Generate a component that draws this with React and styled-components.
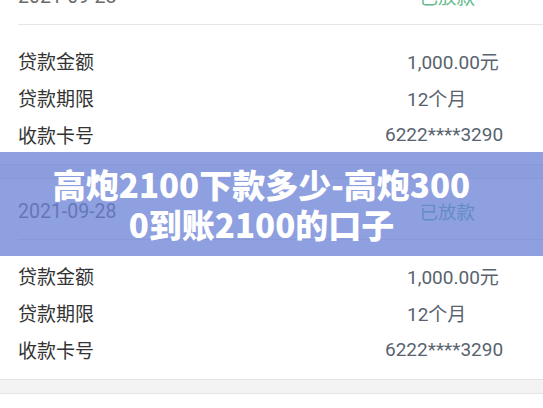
import React from "react";
import styled, { createGlobalStyle } from "styled-components";

const Global = createGlobalStyle`
  html, body {
    margin: 0;
    padding: 0;
    background: #ffffff;
    overflow: hidden;
  }
  body {
    font-family: Roboto, "Noto Sans CJK SC", sans-serif;
  }
`;

const Page = styled.div`
  position: relative;
  width: 543px;
  height: 408px;
  overflow: hidden;
  background: #ffffff;
`;

const List = styled.div`
  display: flex;
  flex-direction: column;
  margin-top: -36px;
`;

const Card = styled.section`
  background: #ffffff;
  display: flex;
  flex-direction: column;
`;

const Header = styled.div`
  height: 60px;
  box-sizing: border-box;
  padding: 4px 68px 0 18px;
  display: flex;
  align-items: center;
  justify-content: space-between;
`;

const DateText = styled.span`
  font-family: Roboto, "Noto Sans CJK SC", sans-serif;
  font-size: 19.5px;
  color: #6a6a6a;
`;

const Status = styled.span`
  font-family: "Noto Sans CJK SC", sans-serif;
  font-size: 18.5px;
  color: #62b98c;
`;

const Divider = styled.div`
  height: 1px;
  margin-left: 18px;
  background: #e6e6e6;
`;

const Body = styled.div`
  padding: 17px 0 11px 18px;
  display: flex;
  flex-direction: column;
`;

const Row = styled.div`
  height: 37px;
  display: grid;
  grid-template-columns: 389px auto;
  align-items: center;
`;

const Label = styled.span`
  font-family: "Noto Sans CJK SC", sans-serif;
  font-size: 19px;
  color: #333333;
  white-space: nowrap;
`;

const Value = styled.span`
  font-family: Roboto, "Noto Sans CJK SC", sans-serif;
  font-size: 19px;
  color: #58636e;
  white-space: nowrap;
  margin-left: ${(p) => (p.$lead ? `-${p.$lead}px` : "0")};
`;

const Gap = styled.div`
  height: 13px;
  background: #f3f3f3;
  border-top: 1px solid #e4e4e4;
  border-bottom: 1px solid #e4e4e4;
`;

const Banner = styled.div`
  position: absolute;
  left: 0;
  right: 0;
  top: 152px;
  height: 104px;
  box-sizing: border-box;
  padding: 12px 66px 12px 46px;
  background: rgba(100, 124, 214, 0.72);
  display: flex;
  justify-content: center;
`;

const Title = styled.h1`
  margin: 0;
  font-family: "Noto Sans CJK SC", sans-serif;
  font-weight: 900;
  font-size: 33px;
  line-height: 40px;
  color: #ffffff;
  text-align: center;
  word-break: break-all;
`;

const loan = {
  date: "2021-09-28",
  status: "已放款",
  rows: [
    { label: "贷款金额", value: "1,000.00元" },
    { label: "贷款期限", value: "12个月" },
    { label: "收款卡号", value: "6222****3290", lead: 22 },
  ],
};

function LoanCard({ data }) {
  return (
    <Card>
      <Header>
        <DateText>{data.date}</DateText>
        <Status>{data.status}</Status>
      </Header>
      <Divider />
      <Body>
        {data.rows.map((r) => (
          <Row key={r.label}>
            <Label>{r.label}</Label>
            <Value $lead={r.lead}>{r.value}</Value>
          </Row>
        ))}
      </Body>
    </Card>
  );
}

export default function App() {
  return (
    <Page>
      <Global />
      <List>
        <LoanCard data={loan} />
        <Gap />
        <LoanCard data={loan} />
        <Gap />
        <LoanCard data={loan} />
      </List>
      <Banner>
        <Title>高炮2100下款多少-高炮3000到账2100的口子</Title>
      </Banner>
    </Page>
  );
}
